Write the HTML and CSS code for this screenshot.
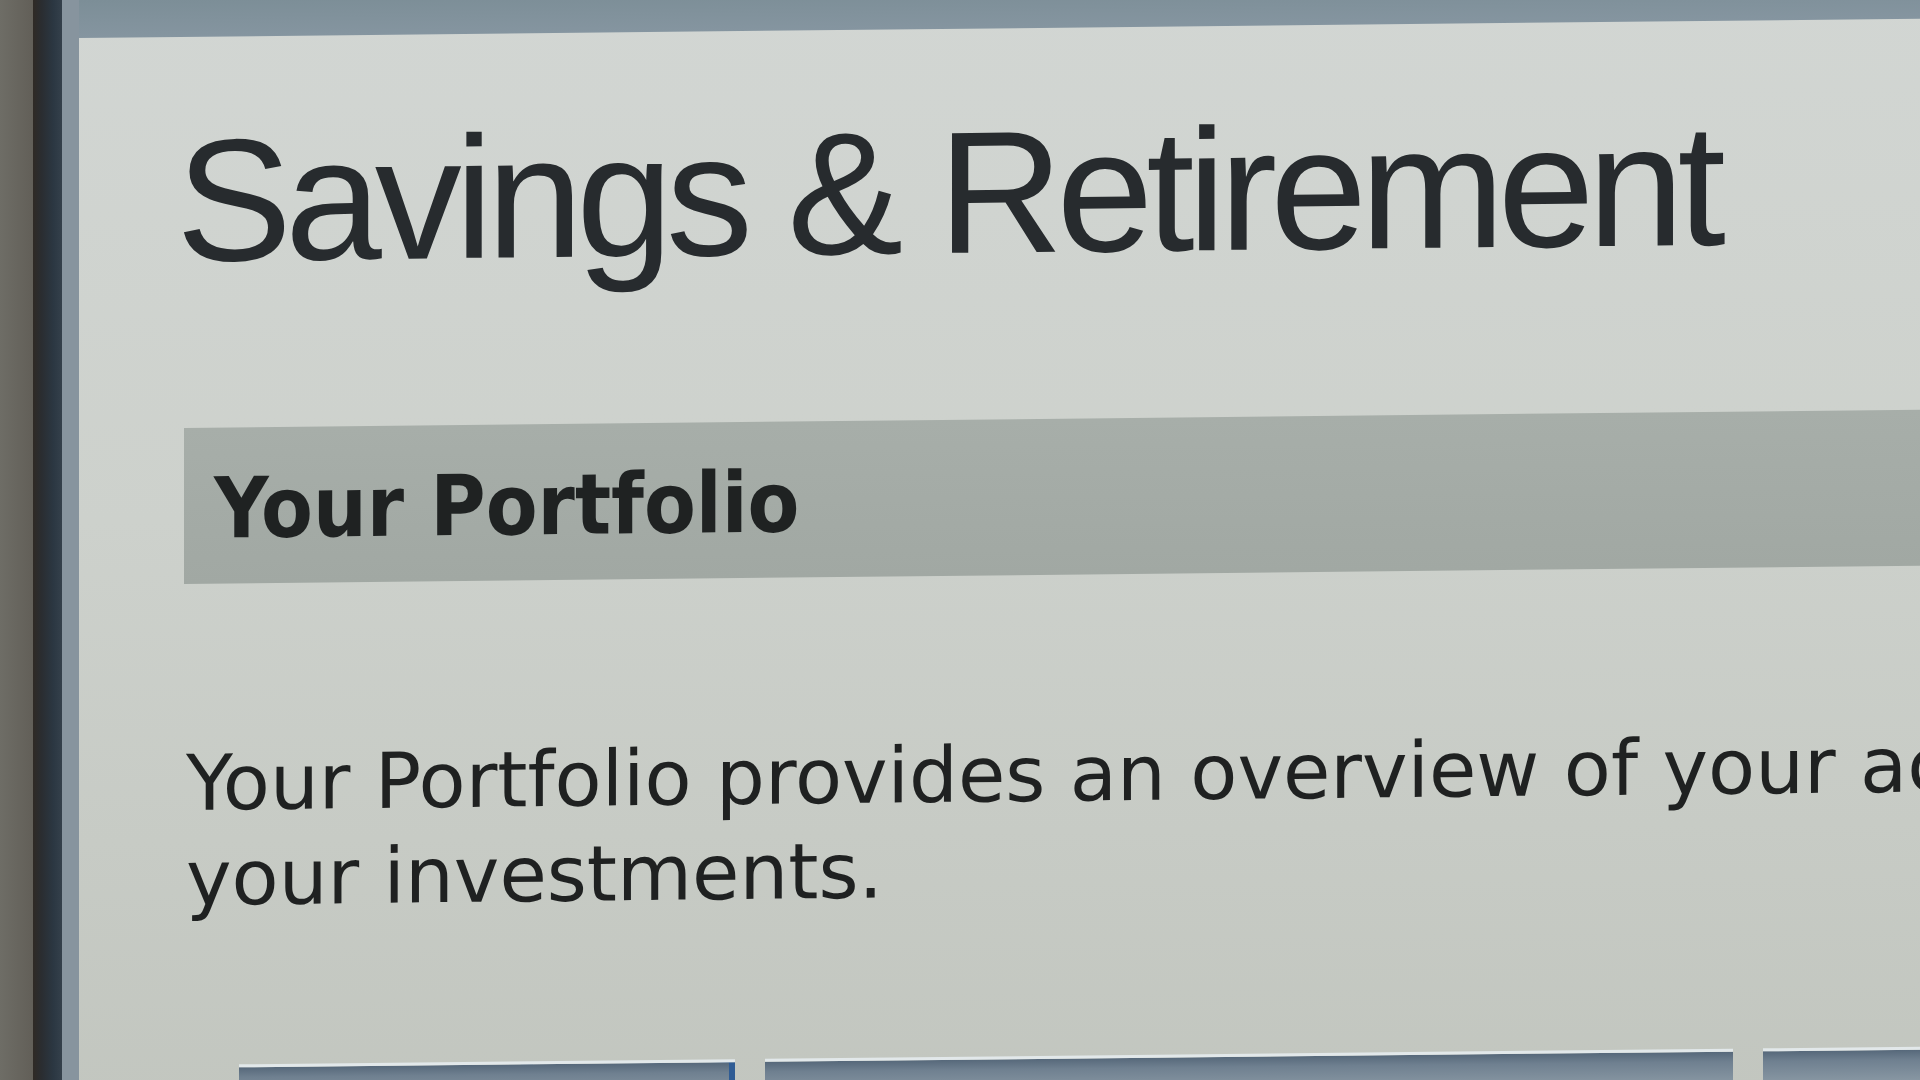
FILE: index.html
```html
<!DOCTYPE html>
<html lang="en">
<head>
<meta charset="utf-8">
<title>Savings &amp; Retirement</title>
<link rel="stylesheet" href="styles.css">
</head>
<body>
<div class="desk">
  <div class="bezel"></div>
  <div class="frame"></div>
  <div class="screen">
    <div class="page">
      <div class="topbar"></div>
      <main class="content">
        <h1 class="title">Savings &amp; Retirement</h1>
        <h2 class="section-bar">Your Portfolio</h2>
        <p class="intro">Your Portfolio provides an overview of your accounts and the current value of<br>your investments.</p>
        <nav class="tabs">
          <span class="tab tab-first"></span>
          <span class="tab tab-wide"></span>
          <span class="tab tab-rest"></span>
        </nav>
      </main>
    </div>
  </div>
</div>
</body>
</html>
```
FILE: styles.css
```css
html, body {
  margin: 0;
  padding: 0;
  height: 100%;
  overflow: hidden;
}

body {
  background: #67665f;
}

.desk {
  display: flex;
  height: 1080px;
  overflow: hidden;
}

/* monitor housing on the left */
.bezel {
  width: 33px;
  flex: none;
  background: linear-gradient(90deg, #6e6d66, #625f58);
}

.frame {
  width: 29px;
  flex: none;
  background: linear-gradient(90deg, #2f2a25 0%, #2a2d31 30%, #2b3742 70%, #34404b 100%);
}

.screen {
  flex: 1;
  overflow: hidden;
  border-left: 17px solid #87949e;
  box-shadow: inset 7px 0 0 #65717b;
  background: #cdd1cc;
}

/* the displayed page, seen slightly off-axis */
.page {
  height: 1160px;
  transform: skewY(-0.6deg);
  transform-origin: 0 0;
  background: linear-gradient(180deg, #d2d6d3 0%, #cdd1cc 45%, #c1c5be 100%);
}

.topbar {
  height: 38px;
  background: linear-gradient(180deg, #7c8e97, #8595a0);
}

.content {
  padding-left: 105px;
  display: flex;
  flex-direction: column;
  align-items: flex-start;
}

.title {
  margin: 77px 0 0 -8px;
  font-family: "Liberation Sans", Arial, sans-serif;
  font-weight: 400;
  font-size: 174px;
  line-height: 174px;
  letter-spacing: -7px;
  color: #272b2e;
  white-space: nowrap;
}

.section-bar {
  align-self: stretch;
  margin: 140px 0 0 0;
  height: 156px;
  box-sizing: border-box;
  padding: 39px 0 0 30px;
  background: linear-gradient(180deg, #a7aea9, #a1a8a3);
  font-family: "DejaVu Sans Condensed", "DejaVu Sans", sans-serif;
  font-weight: 700;
  font-size: 84px;
  line-height: 84px;
  color: #1f2222;
  white-space: nowrap;
}

.intro {
  margin: 152px 0 0 2px;
  font-family: "DejaVu Sans", Verdana, sans-serif;
  font-size: 77px;
  line-height: 95px;
  color: #1f2121;
  white-space: nowrap;
}

.tabs {
  display: flex;
  gap: 30px;
  margin: 139px 0 0 55px;
}

.tab {
  display: block;
  height: 80px;
  box-sizing: border-box;
  border-top: 3px solid #e2e8ea;
  background: linear-gradient(180deg, #56687a 0px, #6f8090 10px, #93a1ab 40px);
}

.tab-first {
  width: 496px;
  box-shadow: inset -6px 0 0 #2f5c94;
}

.tab-wide {
  width: 968px;
}

.tab-rest {
  width: 400px;
}
```
